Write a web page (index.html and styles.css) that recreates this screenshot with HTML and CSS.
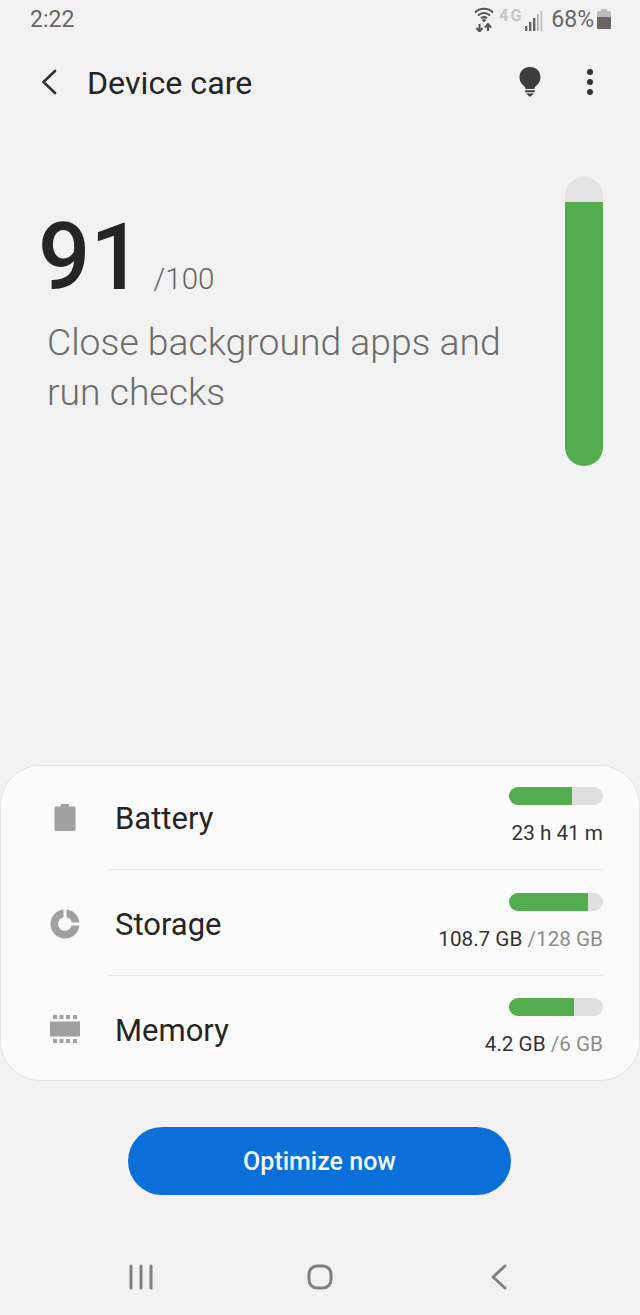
FILE: index.html
```html
<!DOCTYPE html>
<html lang="en">

<head>
  <meta charset="UTF-8" />
  <meta name="viewport" content="width=device-width, initial-scale=1.0" />
  <title>Device care</title>
  <link rel="stylesheet" href="styles.css">
</head>

<body>
  <div class="screen">
    <div class="status-bar">
      <span class="clock">2:22</span>
      <div class="status-icons">
        <svg class="ic-wifi" width="20" height="26" viewBox="0 0 20 26">
          <path d="M1 6.500C6 1.500 14 1.500 19 6.500M4 9.500C7.500 6.200 12.500 6.200 16 9.500M7 12.300C8.800 10.900 11.200 10.900 13 12.300" fill="none" stroke="#555" stroke-width="2" />
          <circle cx="10" cy="14.300" r="1.600" fill="#555" />
          <path d="M5.500 18v7M2.500 22l3 3.500 3-3.500M14 25v-7M11 21.500l3-3.500 3 3.500" fill="none" stroke="#555" stroke-width="2" />
        </svg>
        <span class="net-label">4G</span>
        <svg class="ic-signal" width="18" height="20" viewBox="0 0 18 20">
          <rect x="0" y="15" width="2.400" height="5" fill="#666" />
          <rect x="4" y="11" width="2.400" height="9" fill="#666" />
          <rect x="8" y="7" width="2.400" height="13" fill="#666" />
          <rect x="12" y="3" width="1.600" height="17" fill="#aaa" />
          <rect x="15.600" y="0" width="1.600" height="20" fill="#bbb" />
        </svg>
        <span class="battery-pct">68%</span>
        <svg class="ic-battery" width="14" height="20" viewBox="0 0 14 20">
          <path d="M4 0h6v2h3a1 1 0 0 1 1 1v16a1 1 0 0 1-1 1H1a1 1 0 0 1-1-1V3a1 1 0 0 1 1-1h3z" fill="#bdbdbd" />
          <path d="M0 8h14v11a1 1 0 0 1-1 1H1a1 1 0 0 1-1-1z" fill="#666" />
        </svg>
      </div>
    </div>

    <div class="toolbar">
      <svg class="ic-back" width="18" height="26" viewBox="0 0 18 26">
        <path d="M15 2L3.500 13 15 24" fill="none" stroke="#333" stroke-width="2.600" stroke-linecap="round" stroke-linejoin="round" />
      </svg>
      <h1 class="title">Device care</h1>
      <svg class="ic-bulb" width="24" height="32" viewBox="0 0 24 32">
        <path d="M12 1C5.600 1 1.500 5.600 1.500 11.200c0 4.300 2.500 7 5 9.300.8.800 1 1.500 1 2.500h9c0-1 .2-1.700 1-2.500 2.500-2.300 5-5 5-9.300C22.500 5.600 18.400 1 12 1z" fill="#3c3c3c" />
        <rect x="7" y="24.300" width="10" height="2" rx="1" fill="#3c3c3c" />
        <path d="M8 27.500h8L12 31z" fill="#3c3c3c" />
      </svg>
      <div class="more-dots"><i></i><i></i><i></i></div>
    </div>

    <div class="score-area">
      <div class="score-text">
        <div class="score-line">
          <span class="score">91</span>
          <span class="score-max">/100</span>
        </div>
        <p class="score-msg">Close background apps and run checks</p>
      </div>
      <div class="score-bar"><div class="score-fill"></div></div>
    </div>

    <div class="card">
      <div class="row row-first">
        <div class="row-icon">
          <svg width="22" height="27" viewBox="0 0 22 27">
            <path d="M7 0h8v2.500h5a1.500 1.500 0 0 1 1.500 1.500v21.500a1.500 1.500 0 0 1-1.500 1.500H2a1.500 1.500 0 0 1-1.500-1.500V4A1.500 1.500 0 0 1 2 2.500h5z" fill="#a0a0a0" />
          </svg>
        </div>
        <div class="row-name">Battery</div>
        <div class="row-value">
          <div class="mini-bar"><div class="mini-fill" style="width: 67%"></div></div>
          <div class="value-text">23 h 41 m</div>
        </div>
      </div>
      <div class="row row-line row-mid">
        <div class="row-icon">
          <svg width="30" height="30" viewBox="0 0 30 30">
            <path d="M13.500.6A14.500 14.500 0 1 0 29.400 16.500H21.500A6.800 6.800 0 1 1 13.500 8.300z" fill="#a0a0a0" />
            <path d="M16.500.6A14.500 14.500 0 0 1 29.400 13.500H21.800A6.800 6.800 0 0 0 16.500 8.300z" fill="#a0a0a0" />
          </svg>
        </div>
        <div class="row-name">Storage</div>
        <div class="row-value">
          <div class="mini-bar"><div class="mini-fill" style="width: 84%"></div></div>
          <div class="value-text">108.7 GB <span class="value-total">/128 GB</span></div>
        </div>
      </div>
      <div class="row row-line">
        <div class="row-icon">
          <svg width="30" height="28" viewBox="0 0 30 28">
            <g fill="#a0a0a0">
              <rect x="3" y="0" width="4" height="4" />
              <rect x="9.500" y="0" width="4" height="4" />
              <rect x="16" y="0" width="4" height="4" />
              <rect x="23" y="0" width="4" height="4" />
              <rect x="0" y="6.500" width="30" height="15" />
              <rect x="3" y="24" width="4" height="4" />
              <rect x="9.500" y="24" width="4" height="4" />
              <rect x="16" y="24" width="4" height="4" />
              <rect x="23" y="24" width="4" height="4" />
            </g>
          </svg>
        </div>
        <div class="row-name">Memory</div>
        <div class="row-value">
          <div class="mini-bar"><div class="mini-fill" style="width: 69%"></div></div>
          <div class="value-text">4.2 GB <span class="value-total">/6 GB</span></div>
        </div>
      </div>
    </div>

    <button class="optimize">Optimize now</button>

    <div class="nav-bar">
      <svg width="26" height="26" viewBox="0 0 26 26">
        <path d="M3 2v22M13 2v22M23 2v22" fill="none" stroke="#808080" stroke-width="3" stroke-linecap="round" />
      </svg>
      <svg width="26" height="26" viewBox="0 0 26 26">
        <rect x="2" y="2" width="22" height="22" rx="8" fill="none" stroke="#808080" stroke-width="3" />
      </svg>
      <svg class="nav-back" width="18" height="26" viewBox="0 0 18 26">
        <path d="M15 2L3 13l12 11" fill="none" stroke="#808080" stroke-width="3" stroke-linecap="round" stroke-linejoin="round" />
      </svg>
    </div>
  </div>
</body>

</html>
```

FILE: styles.css
```css
* {
  box-sizing: border-box;
}

body {
  margin: 0;
  font-family: Roboto, "Noto Sans", sans-serif;
  background: #f2f2f2;
  color: #252525;
}

.screen {
  width: 640px;
  height: 1315px;
  display: flex;
  flex-direction: column;
  overflow: hidden;
}

/* status bar */
.status-bar {
  height: 38px;
  padding: 0 29px 0 30px;
  display: flex;
  align-items: center;
  justify-content: space-between;
  color: #666;
}

.clock {
  font-size: 23px;
}

.status-icons {
  display: flex;
  align-items: center;
}

.net-label {
  font-size: 16px;
  font-weight: 700;
  color: #c6c6c6;
  margin: 0 3px 7px 5px;
  width: 23px;
  letter-spacing: 2px;
  white-space: nowrap;
}

.ic-signal {
  margin: 4px 8px 0 0;
}

.battery-pct {
  font-size: 23px;
  margin-right: 3px;
}

/* toolbar */
.toolbar {
  height: 88px;
  padding: 0 47px 0 40px;
  display: flex;
  align-items: center;
}

.title {
  flex: 1;
  margin: 1px 0 0 29px;
  font-size: 32.200px;
  font-weight: 400;
}

.ic-bulb {
  margin-right: 45px;
}

.more-dots {
  display: flex;
  flex-direction: column;
  gap: 4px;
}

.more-dots i {
  width: 6px;
  height: 6px;
  border-radius: 50%;
  background: #333;
}

/* score */
.score-area {
  flex: 1;
  padding: 51px 37px 0 38px;
  display: flex;
  justify-content: space-between;
  align-items: flex-start;
}

.score-text {
  margin-top: 28px;
}

.score-line {
  display: flex;
  align-items: baseline;
  gap: 11px;
  height: 112px;
}

.score {
  font-size: 92px;
  font-weight: 500;
  line-height: 106px;
}

.score-max {
  font-size: 29.500px;
  font-weight: 300;
  color: #666;
}

.score-msg {
  margin: 0 0 0 9px;
  width: 490px;
  font-size: 37.300px;
  line-height: 50px;
  font-weight: 300;
  color: #6c6c6c;
}

.score-bar {
  width: 38px;
  height: 289px;
  background: #e3e3e3;
  border-radius: 19px;
  overflow: hidden;
  display: flex;
  align-items: flex-end;
}

.score-fill {
  width: 100%;
  height: 264px;
  background: #53ad4f;
}

/* card */
.card {
  height: 316px;
  background: #fbfbfb;
  border: 1px solid #e2e2e2;
  border-radius: 40px;
  padding: 0 36px 0 0;
}

.row {
  height: 105px;
  display: flex;
  align-items: center;
}

.row-first {
  height: 103px;
}

.row-mid {
  height: 106px;
}

.row-line {
  border-top: 1px solid #e9e9e9;
  margin-left: 107px;
  padding-top: 2px;
}

.row-icon {
  width: 114px;
  display: flex;
  justify-content: center;
  padding-left: 14px;
}

.row-line .row-icon {
  margin-left: -107px;
}

.row-name {
  flex: 1;
  padding-top: 2px;
  font-size: 31px;
}

.row-value {
  display: flex;
  flex-direction: column;
  align-items: flex-end;
  padding-bottom: 2px;
}

.mini-bar {
  width: 94px;
  height: 18px;
  background: #e0e0e0;
  border-radius: 9px;
  overflow: hidden;
}

.mini-fill {
  height: 100%;
  background: #53ad4f;
}

.value-text {
  margin-top: 14px;
  font-size: 20.700px;
  line-height: 28px;
  color: #333;
  white-space: nowrap;
}

.value-total {
  color: #8c8c8c;
}

/* button + nav */
.optimize {
  align-self: flex-start;
  margin: 46px 0 0 128px;
  width: 383px;
  height: 68px;
  border: none;
  border-radius: 34px;
  background: #0a6fd8;
  color: #f4f8fd;
  font-family: inherit;
  font-size: 25px;
  font-weight: 500;
}

.nav-bar {
  height: 120px;
  padding: 44px 132px 0 128px;
  display: flex;
  align-items: center;
  justify-content: space-between;
}

.nav-back {
  margin-left: 4px;
}
```
